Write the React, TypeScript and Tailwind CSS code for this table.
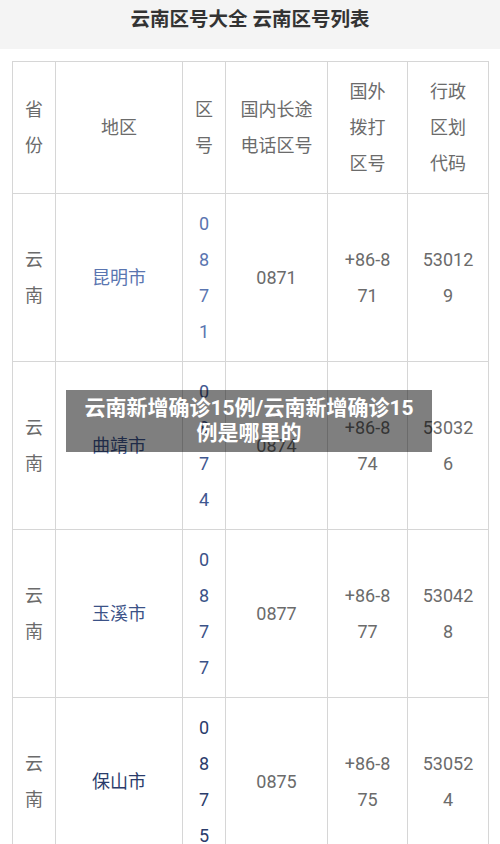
const rows = [
  { city: "昆明市", code: "0871", intl: ["+86-8", "71"], admin: ["53012", "9"], color: "text-[#5a75b0]" },
  { city: "曲靖市", code: "0874", intl: ["+86-8", "74"], admin: ["53032", "6"], color: "text-[#3f5790]" },
  { city: "玉溪市", code: "0877", intl: ["+86-8", "77"], admin: ["53042", "8"], color: "text-[#3b5287]" },
  { city: "保山市", code: "0875", intl: ["+86-8", "75"], admin: ["53052", "4"], color: "text-[#2a3c6b]" },
];

const cell = "border border-[#d6d6d6] px-0 py-[11.5px] text-center align-middle";

const Lines = ({ items }: { items: string[] }) => (
  <>
    {items.map((t, i) => (
      <div key={i}>{t}</div>
    ))}
  </>
);

export default function App() {
  return (
    <div
      className="relative w-[500px] h-[844px] overflow-hidden bg-white"
      style={{ fontFamily: "Roboto, 'Noto Sans CJK SC', sans-serif" }}
    >
      <div className="h-[49px] bg-[#f4f4f4] pt-[6px] text-center text-[19.5px] leading-[28px] font-bold text-[#333]">
        云南区号大全 云南区号列表
      </div>

      <div className="px-3 pt-3">
        <table className="w-[476px] table-fixed border-collapse border border-[#cfcfcf] text-[18px] leading-[36px] text-[#6b6b6b]">
          <colgroup>
            <col className="w-[43px]" />
            <col className="w-[127px]" />
            <col className="w-[43px]" />
            <col className="w-[102px]" />
            <col className="w-[80px]" />
            <col className="w-[81px]" />
          </colgroup>
          <thead>
            <tr className="h-[132px]">
              <th className={`${cell} font-normal`}>
                <Lines items={["省", "份"]} />
              </th>
              <th className={`${cell} font-normal`}>地区</th>
              <th className={`${cell} font-normal`}>
                <Lines items={["区", "号"]} />
              </th>
              <th className={`${cell} font-normal`}>
                <Lines items={["国内长途", "电话区号"]} />
              </th>
              <th className={`${cell} font-normal`}>
                <Lines items={["国外", "拨打", "区号"]} />
              </th>
              <th className={`${cell} font-normal`}>
                <Lines items={["行政", "区划", "代码"]} />
              </th>
            </tr>
          </thead>
          <tbody>
            {rows.map((r) => (
              <tr key={r.city} className="h-[168px]">
                <td className={cell}>
                  <Lines items={["云", "南"]} />
                </td>
                <td className={`${cell} ${r.color}`}>{r.city}</td>
                <td className={`${cell} ${r.color}`}>
                  <Lines items={r.code.split("")} />
                </td>
                <td className={cell}>{r.code}</td>
                <td className={cell}>
                  <Lines items={r.intl} />
                </td>
                <td className={cell}>
                  <Lines items={r.admin} />
                </td>
              </tr>
            ))}
          </tbody>
        </table>
      </div>

      {/* caption laid over the table */}
      <div className="absolute left-[66px] top-[390px] w-[366px] h-[62px] bg-black/50 pt-[6px] text-center text-[21px] leading-[25px] font-bold text-white">
        云南新增确诊15例/云南新增确诊15
        <br />
        例是哪里的
      </div>
    </div>
  );
}
